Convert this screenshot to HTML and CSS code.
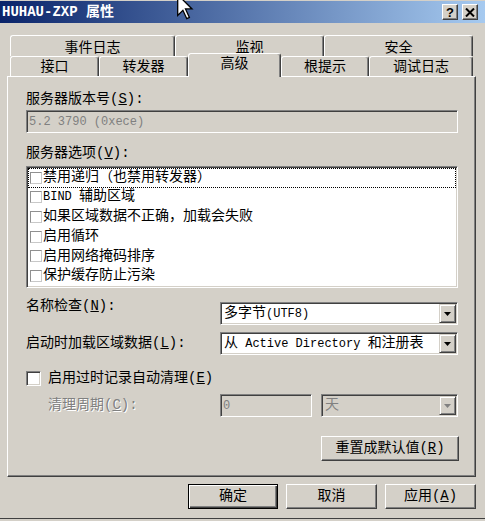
FILE: index.html
```html
<!DOCTYPE html>
<html>
<head>
<meta charset="utf-8">
<link rel="stylesheet" href="styles.css">
</head>
<body>
<div class="window">
	<div class="titlebar">
		<span class="title"><span class="host">HUHAU-ZXP</span> 属性</span>
		<div class="caption-buttons">
			<span class="cbtn help">?</span>
			<span class="cbtn"><svg width="10" height="9" viewBox="0 0 10 9"><path d="M1 0.5 L9 8.5 M9 0.5 L1 8.5" stroke="#000" stroke-width="2"/></svg></span>
		</div>
	</div>

	<!-- mouse pointer over the title bar -->
	<svg class="cursor" width="17" height="26" viewBox="0 0 13 20">
		<path d="M0.5 0.5 L0.5 16.5 L4.5 12.5 L7.5 19 L9.5 18 L6.5 11.5 L11.5 11.5 Z" fill="#fff" stroke="#000" stroke-width="1"/>
	</svg>

	<div class="main">
		<div class="tabs">
			<div class="tab-row back">
				<div class="tab t-events">事件日志</div>
				<div class="tab t-monitor">监视</div>
				<div class="tab t-security">安全</div>
			</div>
			<div class="tab-row front">
				<div class="tab t-iface">接口</div>
				<div class="tab t-fwd">转发器</div>
				<div class="tab t-adv active">高级</div>
				<div class="tab t-hints">根提示</div>
				<div class="tab t-debug">调试日志</div>
			</div>
		</div>

		<div class="panel">
			<div class="label">服务器版本号(<u>S</u>):</div>
			<div class="textbox sunken disabled"><span class="lat">5.2 3790 (0xece)</span></div>

			<div class="label gap">服务器选项(<u>V</u>):</div>
			<div class="listbox sunken">
				<div class="item focus"><span class="flat-check"></span><span>禁用递归（也禁用转发器）</span></div>
				<div class="item"><span class="flat-check"></span><span><span class="lat">BIND </span>辅助区域</span></div>
				<div class="item"><span class="flat-check"></span><span>如果区域数据不正确，加载会失败</span></div>
				<div class="item"><span class="flat-check"></span><span>启用循环</span></div>
				<div class="item"><span class="flat-check"></span><span>启用网络掩码排序</span></div>
				<div class="item"><span class="flat-check"></span><span>保护缓存防止污染</span></div>
			</div>

			<div class="field field-name">
				<div class="field-label">名称检查(<u>N</u>):</div>
				<div class="combo sunken">
					<div class="combo-text">多字节<span class="lat">(UTF8)</span></div>
					<div class="drop"><svg width="7" height="4" viewBox="0 0 7 4"><path d="M0 0 H7 L3.5 4 Z" fill="#000"/></svg></div>
				</div>
			</div>

			<div class="field field-load">
				<div class="field-label">启动时加载区域数据(<u>L</u>):</div>
				<div class="combo sunken">
					<div class="combo-text">从<span class="lat"> Active Directory </span>和注册表</div>
					<div class="drop"><svg width="7" height="4" viewBox="0 0 7 4"><path d="M0 0 H7 L3.5 4 Z" fill="#000"/></svg></div>
				</div>
			</div>

			<div class="check-row">
				<span class="check3d sunken"></span>
				<span>启用过时记录自动清理(<u>E</u>)</span>
			</div>

			<div class="field field-period">
				<div class="field-label indent disabled-text">清理周期(<u>C</u>):</div>
				<div class="textbox-small sunken disabled"><span class="lat">0</span></div>
				<div class="combo sunken disabled">
					<div class="combo-text">天</div>
					<div class="drop"><svg width="7" height="4" viewBox="0 0 7 4"><path d="M0 0 H7 L3.5 4 Z" fill="#808080"/></svg></div>
				</div>
			</div>

			<button class="button reset">重置成默认值(<u>R</u>)</button>
		</div>

		<div class="actions">
			<button class="button ok default">确定</button>
			<button class="button">取消</button>
			<button class="button">应用(<u>A</u>)</button>
		</div>
	</div>
</div>
</body>
</html>
```

FILE: styles.css
```css
body {
	margin: 0;
	width: 485px;
	height: 521px;
	overflow: hidden;
	background: #D4D0C8;
	font-family: "Liberation Mono", "Noto Sans CJK SC", monospace;
	font-size: 14px;
	color: #000;
}

.window {
	position: relative;
	box-sizing: border-box;
	height: 519px;
	padding-top: 1px;
	border-bottom: 1px solid #404040;
}

.titlebar {
	height: 22px;
	display: flex;
	align-items: center;
	justify-content: space-between;
	padding: 0 7px 0 2px;
	background: linear-gradient(to right, #0A246A, #A6CAF0);
	color: #fff;
}

.title {
	font-weight: bold;
	line-height: 22px;
}

.caption-buttons {
	display: flex;
	gap: 4px;
}

.cbtn {
	box-sizing: border-box;
	width: 16px;
	height: 16px;
	display: flex;
	align-items: center;
	justify-content: center;
	background: #D4D0C8;
	border: 1px solid;
	border-color: #fff #404040 #404040 #fff;
	box-shadow: inset -1px -1px #808080;
	color: #000;
}

.cbtn.help {
	font: bold 13px "Liberation Sans", sans-serif;
}

.cursor {
	position: absolute;
	left: 177px;
	top: -6px;
}

.main {
	padding: 12px 0 0 7px;
}

/* tab strip, two rows */
.tabs {
	margin-left: 3px;
	width: 463px;
}

.tab-row {
	display: flex;
}

.tab-row.back {
	height: 21px;
}

.tab-row.front {
	height: 20px;
	align-items: flex-end;
}

.tab {
	box-sizing: border-box;
	height: 100%;
	text-align: center;
	line-height: 17px;
	background: #D4D0C8;
	border-top: 1px solid #fff;
	border-left: 1px solid #fff;
	border-right: 1px solid #404040;
	border-radius: 3px 3px 0 0;
	box-shadow: inset -1px 0 #808080;
}

.back .tab { padding-top: 4px; }
.front .tab { padding-top: 2px; }

.front .tab.active {
	height: 24px;
	margin-bottom: -1px;
	position: relative;
	z-index: 1;
}

.t-events { width: 165px; }
.t-monitor { width: 149px; }
.t-security { width: 149px; }
.t-iface { width: 89px; }
.t-fwd { width: 89px; }
.t-adv { width: 93px; }
.t-hints { width: 88px; }
.t-debug { width: 104px; }

.panel {
	box-sizing: border-box;
	width: 469px;
	height: 401px;
	padding: 14px 17px 0 18px;
	display: flex;
	flex-direction: column;
	border: 1px solid;
	border-color: #fff #404040 #404040 #fff;
	box-shadow: inset -1px -1px #808080;
}

.lat {
	font-size: 12px;
}

.label {
	line-height: 17px;
}

.label.gap {
	margin-top: 12px;
}

.sunken {
	box-sizing: border-box;
	border: 1px solid;
	border-color: #808080 #fff #fff #808080;
	box-shadow: inset 1px 1px #404040, inset -1px -1px #D4D0C8;
	padding: 1px;
}

.disabled {
	color: #808080;
	background: #D4D0C8;
}

.disabled-text {
	color: #808080;
	text-shadow: 1px 1px #fff;
}

.textbox {
	margin-top: 2px;
	height: 23px;
	line-height: 19px;
	padding-left: 2px;
}

.listbox {
	margin-top: 4px;
	height: 122px;
	background: #fff;
}

.item {
	display: flex;
	align-items: center;
	height: 19.6px;
	padding-left: 2px;
	line-height: 17px;
	white-space: pre;
}

.item.focus {
	outline: 1px dotted #000;
	outline-offset: -1px;
}

.flat-check {
	box-sizing: border-box;
	width: 12px;
	height: 12px;
	margin-right: 1px;
	border: 1px solid;
	border-color: #909090 #c8c8c8 #c8c8c8 #909090;
	background: #fff;
}

.field {
	display: flex;
	align-items: center;
	height: 23px;
}

.field-name { margin-top: 14px; }
.field-load { margin-top: 7px; }
.field-period { margin-top: 8px; }

.field-label {
	box-sizing: border-box;
	width: 194px;
	flex: none;
	line-height: 17px;
}

.field-name .field-label {
	align-self: flex-start;
	margin-top: -4px;
}

.field-label.indent {
	padding-left: 22px;
}

.combo {
	flex: 1;
	height: 23px;
	display: flex;
	background: #fff;
}

.combo.disabled {
	background: #D4D0C8;
	margin-left: 9px;
}

.combo-text {
	flex: 1;
	padding-left: 2px;
	line-height: 19px;
	white-space: nowrap;
}

.drop {
	box-sizing: border-box;
	width: 17px;
	display: flex;
	align-items: center;
	justify-content: center;
	background: #D4D0C8;
	border: 1px solid;
	border-color: #D4D0C8 #404040 #404040 #D4D0C8;
	box-shadow: inset 1px 1px #fff, inset -1px -1px #808080;
}

.textbox-small {
	width: 92px;
	height: 23px;
	line-height: 19px;
	padding-left: 2px;
}

.check-row {
	display: flex;
	align-items: center;
	height: 15px;
	margin-top: 16px;
	line-height: 17px;
}

.check3d {
	width: 15px;
	height: 15px;
	margin-right: 7px;
	background: #fff;
}

.button {
	box-sizing: border-box;
	height: 25px;
	padding: 0;
	display: flex;
	align-items: center;
	justify-content: center;
	font: inherit;
	line-height: 17px;
	color: #000;
	background: #D4D0C8;
	border: 1px solid;
	border-color: #fff #404040 #404040 #fff;
	box-shadow: inset -1px -1px #808080;
}

.button.default {
	border-color: #000;
	box-shadow: inset 1px 1px #fff, inset -1px -1px #404040, inset -2px -2px #808080;
}

.reset {
	margin-top: 19px;
	align-self: flex-end;
	width: 138px;
	margin-right: -1px;
}

.actions {
	display: flex;
	justify-content: flex-end;
	gap: 8px;
	width: 469px;
	margin-top: 7px;
}

.actions .button {
	width: 91px;
}

.actions .ok {
	width: 90px;
}
```
